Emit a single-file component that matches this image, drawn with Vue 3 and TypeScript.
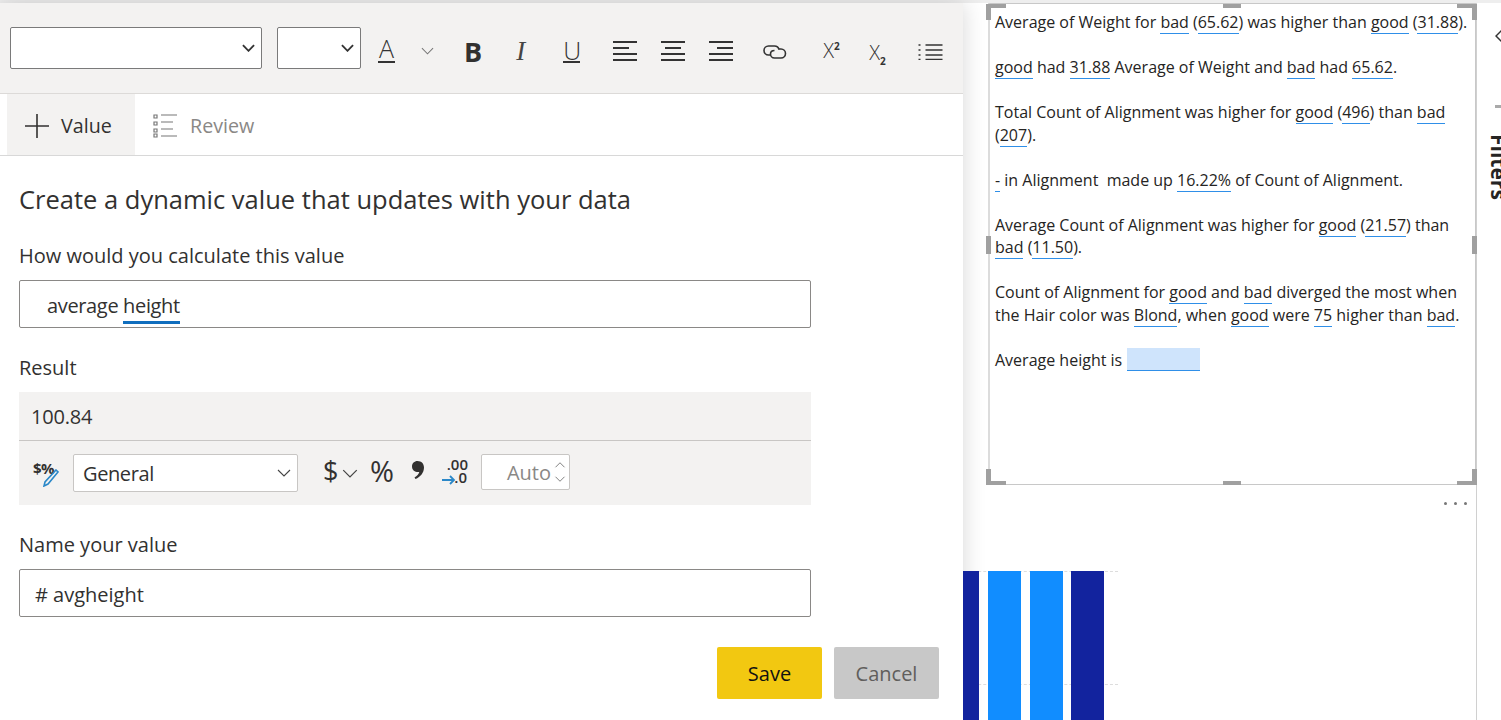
<template>
  <div class="page">
    <div class="top-strip"></div>
    <div class="stage">
      <section class="editor">
        <div class="toolbar">
          <div class="tb-select tb-select--font">
            <svg class="chev-bold" viewBox="0 0 14 8"><path d="M1 1l6 6 6-6" /></svg>
          </div>
          <div class="tb-select tb-select--size">
            <svg class="chev-bold" viewBox="0 0 14 8"><path d="M1 1l6 6 6-6" /></svg>
          </div>
          <div class="tb-tools">
            <span class="tb-a">A</span>
            <svg class="chev-thin tb-a-chev" viewBox="0 0 14 8"><path d="M1 1l6 6 6-6" /></svg>
            <span class="tb-b">B</span>
            <span class="tb-i">I</span>
            <span class="tb-u">U</span>
            <svg class="tb-align tb-align--first" viewBox="0 0 24 20"><path d="M0 1h24M0 7h16M0 13h24M0 19h24" /></svg>
            <svg class="tb-align" viewBox="0 0 24 20"><path d="M0 1h24M4 7h16M0 13h24M0 19h24" /></svg>
            <svg class="tb-align" viewBox="0 0 24 20"><path d="M0 1h24M8 7h16M0 13h24M0 19h24" /></svg>
            <svg class="tb-link" viewBox="0 0 24 16"><path d="M8 11H6a4.500 4.500 0 0 1 0-9h6c2.500 0 4 1.500 4.500 3.500" /><path d="M16 5h2.500a4.500 4.500 0 0 1 0 9h-6.500C9.500 14 8 12 8 10c0-2 1.500-3.500 4-3.500" /></svg>
            <span class="tb-x">X<sup>2</sup></span>
            <span class="tb-x tb-x--sub">X<sub>2</sub></span>
            <svg class="tb-list" viewBox="0 0 24 16"><path d="M7 1h17M7 6h17M7 11h17M7 15.500h17" /><path class="dots" d="M0 1h2M0 6h2M0 11h2M0 15.500h2" /></svg>
          </div>
        </div>

        <div class="tabs">
          <div class="tab tab--active">
            <svg class="tab-plus" viewBox="0 0 24 24"><path d="M12 0v24M0 12h24" /></svg>
            <span>Value</span>
          </div>
          <div class="tab tab--idle">
            <svg class="tab-review" viewBox="0 0 24 24">
              <path d="M8 1h16M8 8h12M8 15h12M8 22h16" />
              <path d="M1 1h3v3H1zM1 8h3v3H1zM1 15h3v3H1zM1 20h3v3H1z" />
            </svg>
            <span>Review</span>
          </div>
        </div>

        <div class="form">
          <h1 class="form-title">Create a dynamic value that updates with your data</h1>

          <label class="form-label form-label--first">How would you calculate this value</label>
          <div class="field field--indent">average <span class="recognized">height</span></div>

          <label class="form-label form-label--result">Result</label>
          <div class="result">
            <div class="result-value">100.84</div>
            <div class="format-row">
              <span class="fmt-edit">
                <span class="fmt-edit__text">$%</span>
                <svg class="fmt-edit__pen" viewBox="0 0 16 18"><path d="M13 1l2 2L5 15l-4 2 1-4z" /></svg>
              </span>
              <div class="fmt-select">
                General
                <svg class="chev-thin" viewBox="0 0 14 8"><path d="M1 1l6 6 6-6" /></svg>
              </div>
              <span class="fmt-dollar">$</span>
              <svg class="chev-thin fmt-dollar-chev" viewBox="0 0 14 8"><path d="M1 1l6 6 6-6" /></svg>
              <span class="fmt-pct">%</span>
              <svg class="fmt-comma" viewBox="0 0 12 18"><path d="M5.500 0C9.500 0 12 2.800 12 6.500c0 5-3.500 9.500-8.500 11.500L2.500 16.500C5 15 6.800 13 7.300 11 3.500 11.500 0 9.500 0 5.500 0 2.300 2.300 0 5.500 0z" /></svg>
              <span class="fmt-dec">
                <span class="fmt-dec__top">.00</span>
                <span class="fmt-dec__bot">.0</span>
                <svg class="fmt-dec__arrow" viewBox="0 0 14 10"><path d="M0 5h12M8 1l4 4-4 4" /></svg>
              </span>
              <div class="fmt-auto">
                <span>Auto</span>
                <span class="fmt-spin">
                  <svg viewBox="0 0 14 8"><path d="M1 7l6-6 6 6" /></svg>
                  <svg viewBox="0 0 14 8"><path d="M1 1l6 6 6-6" /></svg>
                </span>
              </div>
            </div>
          </div>

          <label class="form-label form-label--name">Name your value</label>
          <div class="field field--hash"># avgheight</div>

          <div class="actions">
            <button class="btn btn--save">Save</button>
            <button class="btn btn--cancel">Cancel</button>
          </div>
        </div>
      </section>

      <section class="canvas">
        <div class="canvas-main">
          <div class="visual">
            <i class="h h-tl"></i><i class="h h-tr"></i><i class="h h-bl"></i><i class="h h-br"></i>
            <i class="m m-top"></i><i class="m m-bottom"></i><i class="m m-left"></i><i class="m m-right"></i>
            <div class="narrative">
              <p v-for="(lines, i) in narrative" :key="i">
                <span v-for="(line, j) in lines" :key="j" class="line">
                  <template v-for="(seg, k) in line" :key="k">
                    <span v-if="seg.token" class="token">{{ seg.token }}</span>
                    <template v-else>{{ seg.text }}</template>
                  </template>
                </span>
              </p>
              <p><span class="line">Average height is <span class="token token--blank"></span></span></p>
            </div>
          </div>
          <div class="more">
            <i></i><i></i><i></i>
          </div>
          <div class="chart">
            <i class="grid grid--top"></i>
            <i class="grid grid--mid"></i>
            <div class="bar bar--dark bar--cut"></div>
            <div class="bar bar--light"></div>
            <div class="bar bar--light"></div>
            <div class="bar bar--dark"></div>
          </div>
        </div>
        <aside class="filters">
          <svg class="filters-chev" viewBox="0 0 8 14"><path d="M7 1L1 7l6 6" /></svg>
          <i class="filters-dash"></i>
          <span class="filters-title">Filters</span>
        </aside>
      </section>
    </div>
  </div>
</template>

<script setup lang="ts">
interface Seg {
  text?: string;
  token?: string;
}

const t = (text: string): Seg => ({ text });
const v = (token: string): Seg => ({ token });

const narrative: Seg[][][] = [
  [[t('Average of Weight for '), v('bad'), t(' ('), v('65.62'), t(') was higher than '), v('good'), t(' ('), v('31.88'), t(').')]],
  [[v('good'), t(' had '), v('31.88'), t(' Average of Weight and '), v('bad'), t(' had '), v('65.62'), t('.')]],
  [
    [t('Total Count of Alignment was higher for '), v('good'), t(' ('), v('496'), t(') than '), v('bad')],
    [t('('), v('207'), t(').')]
  ],
  [[v('-'), t(' in Alignment \u00a0made up '), v('16.22%'), t(' of Count of Alignment.')]],
  [
    [t('Average Count of Alignment was higher for '), v('good'), t(' ('), v('21.57'), t(') than')],
    [v('bad'), t(' ('), v('11.50'), t(').')]
  ],
  [
    [t('Count of Alignment for '), v('good'), t(' and '), v('bad'), t(' diverged the most when')],
    [t('the Hair color was '), v('Blond'), t(', when '), v('good'), t(' were '), v('75'), t(' higher than '), v('bad'), t('.')]
  ]
];
</script>

<style>
html,
body {
  margin: 0;
  background: #fff;
  overflow: hidden;
}
</style>

<style scoped>
.page {
  width: 1501px;
  height: 720px;
  overflow: hidden;
  display: flex;
  flex-direction: column;
  font-family: "Open Sans", "Noto Sans", sans-serif;
  color: #323130;
  background: #fff;
}
.top-strip {
  height: 3px;
  flex: none;
  background: #eeeeee;
}
.stage {
  flex: 1;
  display: flex;
  min-height: 0;
}

/* left editor */
.editor {
  width: 963px;
  flex: none;
  background: #fff;
  box-shadow: 0 0 22px rgba(0, 0, 0, 0.16);
  position: relative;
  z-index: 1;
}
.toolbar {
  height: 90px;
  background: #f3f2f1;
  border-bottom: 1px solid #dcdad8;
  display: flex;
  align-items: center;
  padding-left: 10px;
}
.tb-select {
  height: 42px;
  background: #fff;
  border: 1px solid #7a7a7a;
  border-radius: 2px;
  box-sizing: border-box;
  display: flex;
  align-items: center;
  justify-content: flex-end;
  padding-right: 6px;
}
.tb-select--font {
  width: 252px;
  margin-right: 15px;
}
.tb-select--size {
  width: 84px;
  margin-right: 18px;
}
.tb-tools {
  display: flex;
  align-items: center;
  padding-top: 6px;
}
svg {
  display: block;
  flex: none;
  fill: none;
}
.chev-bold {
  width: 13px;
  height: 8px;
  stroke: #333;
  stroke-width: 2;
}
.chev-thin {
  width: 14px;
  height: 8px;
  stroke: #555;
  stroke-width: 1.1;
}
.tb-a {
  width: 17px;
  margin: -4px 0 0 -1px;
  text-align: center;
  font-size: 25px;
  font-weight: 300;
  line-height: 26px;
  border-bottom: 2px solid #333;
  color: #333;
}
.tb-a-chev {
  margin-left: 26px;
  width: 13px;
  stroke: #777;
}
.tb-b {
  margin: 1px 0 0 30px;
  font-size: 27px;
  font-weight: 700;
  line-height: 32px;
  color: #323130;
}
.tb-i {
  margin-left: 34px;
  width: 14px;
  font-size: 27px;
  line-height: 32px;
  font-family: "Liberation Serif", serif;
  font-style: italic;
  color: #444;
}
.tb-u {
  margin-left: 33px;
  width: 17px;
  text-align: center;
  font-size: 25px;
  font-weight: 300;
  line-height: 22px;
  border-bottom: 2px solid #333;
  color: #333;
}
.tb-align {
  width: 24px;
  height: 20px;
  stroke: #333;
  stroke-width: 2.2;
  margin-left: 24px;
}
.tb-align--first {
  margin-left: 33px;
}
.tb-link {
  width: 25px;
  height: 16px;
  stroke: #333;
  stroke-width: 1.6;
  margin: 2px 0 0 29px;
}
.tb-x {
  margin-left: 36px;
  width: 19px;
  font-size: 20px;
  line-height: 24px;
  font-weight: 300;
  color: #333;
  white-space: nowrap;
}
.tb-x--sub {
  margin-left: 27px;
  margin-top: 4px;
}
.tb-x sup,
.tb-x sub {
  font-size: 10px;
  font-weight: 700;
  line-height: 0;
}
.tb-list {
  width: 25px;
  height: 16px;
  stroke: #333;
  stroke-width: 1.4;
  margin-left: 30px;
  margin-top: 2px;
}
.tb-list .dots {
  stroke-dasharray: 2 2;
}

.tabs {
  height: 62px;
  box-sizing: border-box;
  border-bottom: 1px solid #d8d8d8;
  display: flex;
  padding-left: 7px;
}
.tab {
  display: flex;
  align-items: center;
  font-size: 19.7px;
  padding-top: 2px;
}
.tab--active {
  width: 128px;
  box-sizing: border-box;
  padding-left: 18px;
  background: #f3f2f1;
  gap: 12px;
}
.tab--idle {
  padding-left: 18px;
  gap: 13px;
  color: #8a8886;
}
.tab-plus {
  width: 24px;
  height: 24px;
  stroke: #323130;
  stroke-width: 1.6;
}
.tab-review {
  width: 24px;
  height: 24px;
  stroke: #777;
  stroke-width: 1.2;
}

.form {
  width: 792px;
  padding-left: 19px;
}
.form-title {
  margin: 0;
  padding-top: 26px;
  font-size: 25.5px;
  line-height: 34px;
  font-weight: 400;
  color: #323130;
  white-space: nowrap;
}
.form-label {
  display: block;
  font-size: 20px;
  line-height: 28px;
  color: #323130;
}
.form-label--first {
  margin-top: 26px;
  margin-bottom: 10px;
}
.form-label--result {
  margin-top: 26px;
  margin-bottom: 10px;
}
.form-label--name {
  margin-top: 26px;
  margin-bottom: 10px;
}
.field {
  height: 48px;
  box-sizing: border-box;
  border: 1px solid #8a8886;
  border-radius: 2px;
  font-size: 20px;
  line-height: 50px;
  white-space: nowrap;
}
.field--indent {
  padding-left: 27px;
  letter-spacing: -0.35px;
}
.field--hash {
  padding-left: 15px;
}
.recognized {
  display: inline-block;
  line-height: 30px;
  border-bottom: 3px solid #106ebe;
  height: 30px;
}
.result {
  height: 113px;
  background: #f3f2f1;
}
.result-value {
  height: 49px;
  box-sizing: border-box;
  border-bottom: 1px solid #c8c6c4;
  padding-left: 12px;
  font-size: 20px;
  line-height: 50px;
  letter-spacing: -0.2px;
}
.format-row {
  display: flex;
  align-items: center;
  height: 64px;
  box-sizing: border-box;
  padding-left: 14px;
}
.fmt-edit {
  position: relative;
  width: 26px;
  height: 26px;
  margin-right: 14px;
}
.fmt-edit__text {
  font-size: 15px;
  font-weight: 700;
  line-height: 16px;
  display: block;
  letter-spacing: -0.5px;
}
.fmt-edit__pen {
  position: absolute;
  right: 0;
  bottom: -1px;
  width: 16px;
  height: 18px;
  stroke: #2b88c8;
  stroke-width: 1.6;
}
.fmt-select {
  width: 225px;
  height: 38px;
  box-sizing: border-box;
  background: #fff;
  border: 1px solid #c8c6c4;
  border-radius: 2px;
  display: flex;
  align-items: center;
  justify-content: space-between;
  padding: 0 6px 0 9px;
  font-size: 20px;
  letter-spacing: -0.4px;
}
.fmt-select .chev-thin {
  stroke: #444;
}
.fmt-dollar {
  margin: -4px 0 0 25px;
  font-size: 27px;
  line-height: 30px;
  width: 13px;
}
.fmt-dollar-chev {
  margin: 1px 0 0 6px;
  width: 16px;
  height: 9px;
  stroke: #444;
}
.fmt-pct {
  margin: -4px 0 0 12px;
  font-size: 29px;
  line-height: 30px;
  width: 25px;
}
.fmt-comma {
  margin: -6px 0 0 17px;
  width: 12px;
  height: 18px;
  fill: #323130;
}
.fmt-dec {
  position: relative;
  width: 26px;
  height: 30px;
  margin-left: 18px;
  font-weight: 600;
  font-size: 15px;
  line-height: 13px;
  text-align: right;
}
.fmt-dec__top,
.fmt-dec__bot {
  display: block;
}
.fmt-dec__bot {
  padding-right: 1px;
}
.fmt-dec__arrow {
  position: absolute;
  left: 0;
  bottom: 3px;
  width: 14px;
  height: 10px;
  stroke: #2b88c8;
  stroke-width: 1.8;
}
.fmt-auto {
  width: 89px;
  height: 36px;
  box-sizing: border-box;
  margin: -2px 0 0 13px;
  background: #fff;
  border: 1px solid #c8c6c4;
  border-radius: 2px;
  display: flex;
  align-items: center;
  justify-content: flex-end;
  font-size: 20px;
  color: #8a8886;
  padding-right: 1px;
}
.fmt-spin {
  display: flex;
  flex-direction: column;
  gap: 8px;
  width: 17px;
}
.fmt-spin svg {
  width: 12px;
  height: 6px;
  stroke: #666;
  stroke-width: 1.1;
  margin-left: 3px;
}
.actions {
  width: 920px;
  display: flex;
  justify-content: flex-end;
  gap: 12px;
  margin-top: 30px;
}
.btn {
  width: 105px;
  height: 52px;
  border: none;
  border-radius: 2px;
  font-family: inherit;
  font-size: 20px;
  font-weight: 500;
  padding: 0;
}
.btn--save {
  background: #f2c811;
  color: #111;
}
.btn--cancel {
  background: #c8c8c8;
  color: #605e5c;
}

/* right canvas */
.canvas {
  flex: 1;
  display: flex;
  min-width: 0;
}
.canvas-main {
  width: 514px;
  flex: none;
  box-sizing: border-box;
  border-right: 1px solid #d0d0d0;
  display: flex;
  flex-direction: column;
}
.visual {
  position: relative;
  margin-left: 25px;
  height: 482px;
  flex: none;
  box-sizing: border-box;
  border-left: 2px solid #dcdcdc;
  border-right: 1px solid #c8c8c8;
  border-top: 1px solid #c8c8c8;
  border-bottom: 1px solid #c8c8c8;
}
.narrative {
  padding: 7px 0 0 5px;
  font-size: 16px;
  line-height: 22.5px;
  color: #252423;
  white-space: nowrap;
}
.narrative p {
  margin: 0 0 22.5px;
}
.line {
  display: block;
}
.token {
  border-bottom: 1px solid #2f8fe8;
}
.token--blank {
  display: inline-block;
  width: 73px;
  height: 23px;
  margin: -1px 0 0 1px;
  background: #cfe4fc;
  vertical-align: top;
  box-sizing: border-box;
}
.h {
  position: absolute;
  width: 15px;
  height: 12px;
  border: 0 solid #a0a0a0;
}
.h-tl {
  left: -4px;
  top: 0;
  border-width: 4px 0 0 5px;
}
.h-tr {
  right: -2px;
  top: 0;
  border-width: 4px 5px 0 0;
}
.h-bl {
  left: -4px;
  bottom: -1px;
  border-width: 0 0 4px 5px;
}
.h-br {
  right: -2px;
  bottom: -1px;
  border-width: 0 5px 4px 0;
}
.m {
  position: absolute;
  background: #a0a0a0;
}
.m-top,
.m-bottom {
  width: 18px;
  height: 4px;
  left: 233px;
}
.m-top {
  top: 0;
}
.m-bottom {
  bottom: -1px;
}
.m-left,
.m-right {
  width: 5px;
  height: 18px;
  top: 232px;
}
.m-left {
  left: -4px;
}
.m-right {
  right: -2px;
}
.more {
  display: flex;
  justify-content: flex-end;
  gap: 7px;
  padding: 17px 9px 0 0;
  height: 3px;
  flex: none;
}
.more i {
  width: 3px;
  height: 3px;
  border-radius: 50%;
  background: #777;
}
.chart {
  margin-top: 66px;
  flex: 1;
  display: flex;
  position: relative;
  z-index: 2;
}
.grid {
  position: absolute;
  left: 0;
  width: 155px;
  border-top: 1px dashed #ddd;
}
.grid--top {
  top: 0;
}
.grid--mid {
  top: 113px;
}
.bar {
  position: relative;
  width: 33px;
  margin-right: 8.5px;
}
.bar--cut {
  width: 16px;
  margin-right: 9px;
}
.bar--dark {
  background: #12239e;
}
.bar--light {
  background: #118dff;
}

.filters {
  flex: 1;
  overflow: hidden;
  display: flex;
  flex-direction: column;
  align-items: flex-start;
  padding-left: 18px;
}
.filters-chev {
  width: 8px;
  height: 14px;
  stroke: #333;
  stroke-width: 1.5;
  margin-top: 26px;
}
.filters-dash {
  width: 8px;
  height: 3px;
  margin-top: 62px;
  background: #aaa;
}
.filters-title {
  margin-top: 26px;
  margin-left: -9px;
  writing-mode: vertical-rl;
  font-size: 21px;
  font-weight: 700;
  color: #252423;
  line-height: 26px;
}
</style>
